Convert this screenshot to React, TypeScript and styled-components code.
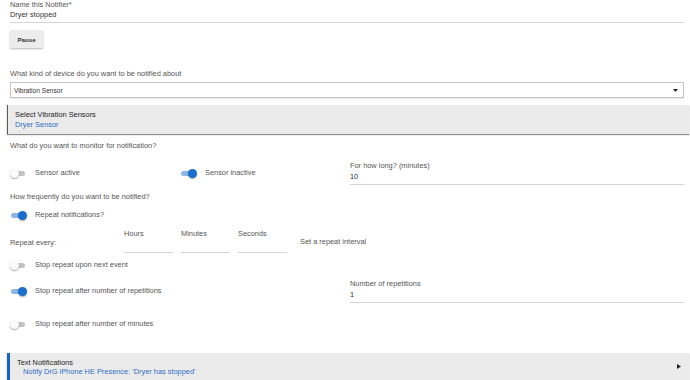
import React from "react";
import styled, { createGlobalStyle } from "styled-components";

const Global = createGlobalStyle`
  html, body { margin: 0; padding: 0; background: #fff; }
  body { font-family: "Liberation Sans", Arial, sans-serif; font-size: 7.4px; color: #555; }
  * { box-sizing: border-box; }
`;

const Page = styled.div`
  width: 690px;
  height: 380px;
  overflow: hidden;
  padding: 0 1px 0 7px;
  display: flex;
  flex-direction: column;
`;

const Section = styled.div<{ $mt?: number }>`
  margin: ${(p) => p.$mt ?? 0}px 5px 0 3px;
`;

const Label = styled.div<{ $lh?: number }>`
  line-height: ${(p) => p.$lh ?? 10}px;
  color: #555;
  white-space: nowrap;
`;

const Value = styled.div<{ $h?: number }>`
  line-height: ${(p) => p.$h ?? 11}px;
  height: ${(p) => (p.$h ?? 11) + 1}px;
  padding-bottom: 1px;
  color: #333;
  border-bottom: 1px solid #d4d4d4;
  box-sizing: content-box;
`;

const Field = styled.div`
  display: flex;
  flex-direction: column;
`;

const Button = styled.button`
  width: 33px;
  height: 18px;
  padding: 0;
  border: none;
  border-radius: 1px;
  background: #ececec;
  box-shadow: 0 1px 2px rgba(0, 0, 0, 0.28);
  font-family: "Liberation Sans", Arial, sans-serif;
  font-weight: bold;
  font-size: 6.2px;
  color: #333;
`;

const Select = styled.div`
  margin-top: 3px;
  height: 16px;
  border: 1px solid #c6c6c6;
  box-shadow: 0 1px 1px rgba(0, 0, 0, 0.08);
  display: flex;
  align-items: center;
  justify-content: space-between;
  padding: 0 5px 0 3px;
  font-size: 6.6px;
  color: #333;
`;

const Panel = styled.div<{ $mt: number; $accent?: string }>`
  margin-top: ${(p) => p.$mt}px;
  background: #ebebeb;
  border-left: ${(p) => (p.$accent ? `3px solid ${p.$accent}` : "1px solid #5a5a5a")};
  box-shadow: 0 1px 1px rgba(0, 0, 0, 0.45);
  display: flex;
  align-items: center;
  justify-content: space-between;
`;

const PanelBody = styled.div<{ $pl: number; $py: string; $lh: number }>`
  padding: ${(p) => p.$py};
  padding-left: ${(p) => p.$pl}px;
  line-height: ${(p) => p.$lh}px;
`;

const PanelTitle = styled.div`
  color: #222;
`;

const PanelLink = styled.div<{ $indent?: number }>`
  color: #2e6bc6;
  padding-left: ${(p) => p.$indent ?? 0}px;
`;

const ToggleGrid = styled.div<{ $mt: number; $h: number }>`
  margin: ${(p) => p.$mt}px 5px 0 3px;
  display: grid;
  grid-template-columns: 170px 170px 1fr;
  min-height: ${(p) => p.$h}px;
  align-items: center;
`;

const ToggleItem = styled.div`
  display: flex;
  align-items: center;
  gap: 8px;
  color: #555;
  line-height: 10px;
  white-space: nowrap;
`;

const SwitchBox = styled.span`
  position: relative;
  width: 17px;
  height: 9px;
  flex: none;
`;

const Track = styled.span<{ $on: boolean }>`
  position: absolute;
  left: 1px;
  top: 2px;
  width: 14px;
  height: 5px;
  border-radius: 3px;
  background: ${(p) => (p.$on ? "#8db5e6" : "#c2c2c2")};
`;

const Thumb = styled.span<{ $on: boolean }>`
  position: absolute;
  top: 0;
  left: ${(p) => (p.$on ? 8 : 0)}px;
  width: 9px;
  height: 9px;
  border-radius: 50%;
  background: ${(p) => (p.$on ? "#1a6fcc" : "#fafafa")};
  box-shadow: 0 1px 1.5px rgba(0, 0, 0, 0.35);
`;

const Switch = ({ on }: { on: boolean }) => (
  <SwitchBox>
    <Track $on={on} />
    <Thumb $on={on} />
  </SwitchBox>
);

const Toggle = ({ on, children }: { on: boolean; children: React.ReactNode }) => (
  <ToggleItem>
    <Switch on={on} />
    <span>{children}</span>
  </ToggleItem>
);

const RepeatRow = styled.div`
  margin: 8px 5px 0 3px;
  display: grid;
  grid-template-columns: 106px 49px 49px 49px auto;
  column-gap: 8px;
  align-items: start;
`;

const RowText = styled.div<{ $pt: number; $pl?: number }>`
  padding-top: ${(p) => p.$pt}px;
  padding-left: ${(p) => p.$pl ?? 0}px;
  line-height: 10px;
  color: #555;
  white-space: nowrap;
`;

const Caret = () => (
  <svg width="5" height="3" viewBox="0 0 5 3">
    <path d="M0 0 H5 L2.5 3 Z" fill="#222" />
  </svg>
);

const Arrow = () => (
  <svg width="4" height="5" viewBox="0 0 4 5" style={{ marginRight: 8 }}>
    <path d="M0 0 L4 2.5 L0 5 Z" fill="#222" />
  </svg>
);

export default function App() {
  return (
    <>
      <Global />
      <Page>
        <Section>
          <Field>
            <Label>Name this Notifier*</Label>
            <Value $h={10}>Dryer stopped</Value>
          </Field>
        </Section>
        <Section $mt={7}>
          <Button>Pause</Button>
        </Section>
        <Section $mt={21}>
          <Label>What kind of device do you want to be notified about</Label>
          <Select>
            <span>Vibration Sensor</span>
            <Caret />
          </Select>
        </Section>
        <Panel $mt={7}>
          <PanelBody $pl={7} $py="4.5px 0" $lh={10}>
            <PanelTitle>Select Vibration Sensors</PanelTitle>
            <PanelLink>Dryer Sensor</PanelLink>
          </PanelBody>
        </Panel>
        <Section $mt={7}>
          <Label>What do you want to monitor for notification?</Label>
        </Section>
        <ToggleGrid $mt={10} $h={23}>
          <Toggle on={false}>Sensor active</Toggle>
          <Toggle on={true}>Sensor inactive</Toggle>
          <Field>
            <Label>For how long? (minutes)</Label>
            <Value>10</Value>
          </Field>
        </ToggleGrid>
        <Section $mt={7}>
          <Label>How frequently do you want to be notified?</Label>
        </Section>
        <ToggleGrid $mt={7} $h={12}>
          <Toggle on={true}>Repeat notifications?</Toggle>
        </ToggleGrid>
        <RepeatRow>
          <RowText $pt={9}>Repeat every:</RowText>
          <Field>
            <Label>Hours</Label>
            <Value $h={11}></Value>
          </Field>
          <Field>
            <Label>Minutes</Label>
            <Value $h={11}></Value>
          </Field>
          <Field>
            <Label>Seconds</Label>
            <Value $h={11}></Value>
          </Field>
          <RowText $pt={8} $pl={5}>Set a repeat interval</RowText>
        </RepeatRow>
        <ToggleGrid $mt={6} $h={12}>
          <Toggle on={false}>Stop repeat upon next event</Toggle>
        </ToggleGrid>
        <ToggleGrid $mt={8} $h={23}>
          <Toggle on={true}>Stop repeat after number of repetitions</Toggle>
          <span />
          <Field>
            <Label>Number of repetitions</Label>
            <Value>1</Value>
          </Field>
        </ToggleGrid>
        <ToggleGrid $mt={15} $h={12}>
          <Toggle on={false}>Stop repeat after number of minutes</Toggle>
        </ToggleGrid>
        <Panel $mt={23} $accent="#1763c4">
          <PanelBody $pl={7} $py="5px 0 4px" $lh={9}>
            <PanelTitle>Text Notifications</PanelTitle>
            <PanelLink $indent={6}>Notify DrG iPhone HE Presence: 'Dryer has stopped'</PanelLink>
          </PanelBody>
          <Arrow />
        </Panel>
      </Page>
    </>
  );
}
